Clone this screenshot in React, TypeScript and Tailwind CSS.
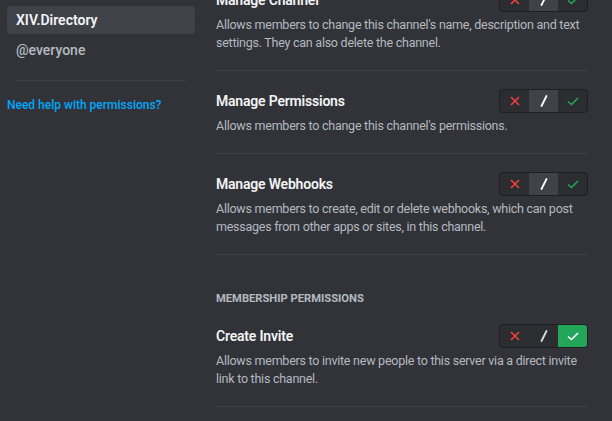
import { ReactNode } from "react";

type State = "deny" | "neutral" | "allow";

interface Perm {
  title: string;
  desc: string;
  state: State;
}

const PERMS_TOP: Perm[] = [
  {
    title: "Manage Channel",
    desc: "Allows members to change this channel's name, description and text settings. They can also delete the channel.",
    state: "neutral",
  },
  {
    title: "Manage Permissions",
    desc: "Allows members to change this channel's permissions.",
    state: "neutral",
  },
  {
    title: "Manage Webhooks",
    desc: "Allows members to create, edit or delete webhooks, which can post messages from other apps or sites, in this channel.",
    state: "neutral",
  },
];

const PERMS_MEMBERSHIP: Perm[] = [
  {
    title: "Create Invite",
    desc: "Allows members to invite new people to this server via a direct invite link to this channel.",
    state: "allow",
  },
];

function Segment({ active, color, children }: { active: boolean; color: string; children: ReactNode }) {
  return (
    <div className={`flex h-full w-[29px] items-center justify-center ${active ? color : ""}`}>
      {children}
    </div>
  );
}

function Toggle({ state }: { state: State }) {
  const allow = state === "allow";
  return (
    <div className="flex h-6 w-[89px] shrink-0 overflow-hidden rounded-[4px] border border-[#1e1f22] bg-[#2b2d31]">
      <Segment active={state === "deny"} color="bg-[#da373c]">
        <svg width="12" height="12" viewBox="0 0 12 12">
          <path d="M2 2L10 10M10 2L2 10" stroke={state === "deny" ? "#fff" : "#f23f43"} strokeWidth="1.6" />
        </svg>
      </Segment>
      <Segment active={state === "neutral"} color="bg-[#404249]">
        <svg width="12" height="14" viewBox="0 0 12 14">
          <path d="M8.5 2L3.5 12" stroke={state === "neutral" ? "#fff" : "#dbdee1"} strokeWidth="1.8" strokeLinecap="round" />
        </svg>
      </Segment>
      <Segment active={allow} color="bg-[#23a55a]">
        <svg width="14" height="12" viewBox="0 0 14 12">
          <path d="M2 6.5L5.5 9.5L12 3" fill="none" stroke={allow ? "#fff" : "#23a55a"} strokeWidth="1.6" />
        </svg>
      </Segment>
    </div>
  );
}

function PermRow({ p }: { p: Perm }) {
  return (
    <div className="border-b border-[#3f4147] pt-[18px] pb-[18px]">
      <div className="flex items-start justify-between">
        <div className="text-[14px] font-semibold leading-6 tracking-[-0.2px] text-[#f2f3f5]">{p.title}</div>
        <Toggle state={p.state} />
      </div>
      <div className="mt-1 text-[12.5px] leading-[18px] tracking-[-0.25px] text-[#b5bac1]">{p.desc}</div>
    </div>
  );
}

export default function App() {
  return (
    <div
      className="flex h-[421px] w-[612px] overflow-hidden bg-[#313338]"
      style={{ fontFamily: 'Roboto, "Noto Sans", sans-serif' }}
    >
      {/* roles sidebar */}
      <div className="w-[216px] shrink-0 pl-[7px] pr-[21px] pt-[6px]">
        <div className="flex h-[28px] items-center rounded-[4px] bg-[#404249] px-[9px] text-[14px] font-semibold text-[#f2f3f5]">
          XIV.Directory
        </div>
        <div className="flex h-[32px] items-center px-[9px] text-[14px] font-medium text-[#b5bac1]">
          @everyone
        </div>
        <div className="mx-[9px] mt-[14px] h-px bg-[#3f4147]" />
        <div className="mt-[15px] text-[12px] font-medium text-[#00a8fc]">Need help with permissions?</div>
      </div>

      {/* permissions list */}
      <div className="-mt-[30px] w-[372px] shrink-0">
        {PERMS_TOP.map((p) => (
          <PermRow key={p.title} p={p} />
        ))}
        <div className="mt-[36px] text-[11.2px] font-bold uppercase leading-4 text-[#b5bac1]">
          Membership Permissions
        </div>
        <div className="-mt-px">
          {PERMS_MEMBERSHIP.map((p) => (
            <PermRow key={p.title} p={p} />
          ))}
        </div>
      </div>
    </div>
  );
}
